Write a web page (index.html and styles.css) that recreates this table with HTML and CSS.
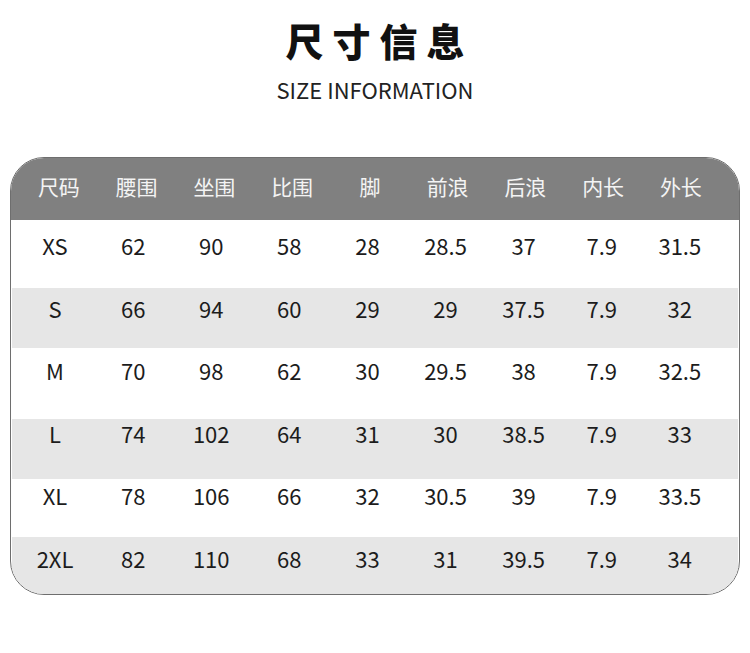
FILE: index.html
```html
<!DOCTYPE html>
<html lang="zh">
<head>
<meta charset="utf-8">
<link rel="stylesheet" href="styles.css">
</head>
<body>
<div class="page">
  <h1 class="title">尺寸信息</h1>
  <div class="subtitle">SIZE INFORMATION</div>
  <div class="table">
    <div class="row head">
      <div>尺码</div><div>腰围</div><div>坐围</div><div>比围</div><div>脚</div><div>前浪</div><div>后浪</div><div>内长</div><div>外长</div>
    </div>
    <div class="row r1">
      <div>XS</div><div>62</div><div>90</div><div>58</div><div>28</div><div>28.5</div><div>37</div><div>7.9</div><div>31.5</div>
    </div>
    <div class="row r2 alt">
      <div>S</div><div>66</div><div>94</div><div>60</div><div>29</div><div>29</div><div>37.5</div><div>7.9</div><div>32</div>
    </div>
    <div class="row r3">
      <div>M</div><div>70</div><div>98</div><div>62</div><div>30</div><div>29.5</div><div>38</div><div>7.9</div><div>32.5</div>
    </div>
    <div class="row r4 alt">
      <div>L</div><div>74</div><div>102</div><div>64</div><div>31</div><div>30</div><div>38.5</div><div>7.9</div><div>33</div>
    </div>
    <div class="row r5">
      <div>XL</div><div>78</div><div>106</div><div>66</div><div>32</div><div>30.5</div><div>39</div><div>7.9</div><div>33.5</div>
    </div>
    <div class="row r6 alt">
      <div>2XL</div><div>82</div><div>110</div><div>68</div><div>33</div><div>31</div><div>39.5</div><div>7.9</div><div>34</div>
    </div>
  </div>
</div>
</body>
</html>
```
FILE: styles.css
```css
* { box-sizing: border-box; }
html, body { margin: 0; padding: 0; background: #ffffff; }
body {
  font-family: "Noto Sans CJK SC", "Noto Sans", sans-serif;
  color: #1c1c1c;
  width: 750px;
  height: 653px;
  overflow: hidden;
}
.page {
  padding: 20px 10px 0 10px;
  display: flex;
  flex-direction: column;
  align-items: center;
}
.title {
  margin: 0;
  font-size: 38px;
  line-height: 40px;
  font-weight: 900;
  letter-spacing: 9px;
  padding-left: 9px;
  color: #111111;
}
.subtitle {
  margin-top: 17px;
  font-size: 22px;
  line-height: 24px;
  letter-spacing: 0;
  color: #222222;
}
.table {
  margin-top: 56px;
  width: 730px;
  border: 1px solid #6e6e6e;
  border-radius: 34px;
  overflow: hidden;
  background: #ffffff;
}
.row {
  display: grid;
  grid-template-columns: repeat(9, 78.1px);
  padding: 0 0 0 5px;
  font-size: 22px;
  line-height: 28px;
  align-items: start;
}
.row > div { text-align: center; }
.head {
  grid-template-columns: repeat(9, 77.75px);
  height: 62px;
  background: #808080;
  color: #f4f4f4;
  padding-left: 9px;
  padding-top: 14px;
  font-size: 21px;
}
.alt { background: #e6e6e6; margin: 0 1px; padding-left: 4px; }
.r1 { height: 68px; padding-top: 11px; }
.r2 { height: 60px; padding-top: 6px; }
.r3 { height: 71px; padding-top: 8px; }
.r4 { height: 60px; padding-top: 0; }
.r5 { height: 58px; padding-top: 2px; }
.r6 { height: 57px; padding-top: 7px; }
```
